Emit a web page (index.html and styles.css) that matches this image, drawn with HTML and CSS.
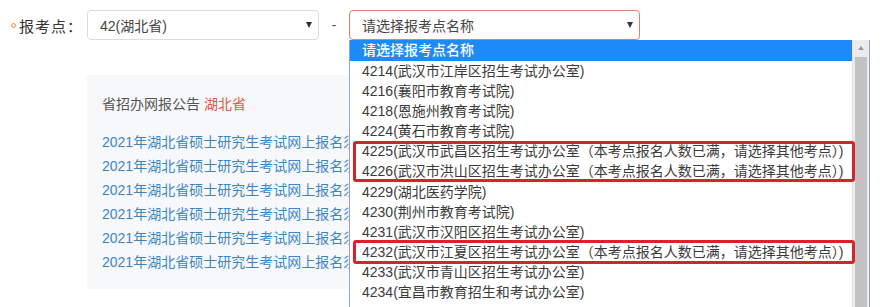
FILE: index.html
```html
<!DOCTYPE html>
<html lang="zh-CN">
<head>
  <meta charset="UTF-8">
  <title>报考点选择</title>
  <link rel="stylesheet" href="styles.css">
</head>
<body>
  <div class="form-row">
    <span class="req"></span>
    <span class="label">报考点：</span>
    <div class="select province">
      <span>42(湖北省)</span>
      <i class="arrow"></i>
    </div>
    <span class="dash">-</span>
    <div class="select site">
      <span>请选择报考点名称</span>
      <i class="arrow"></i>

      <div class="dropdown">
        <ul class="options">
          <li class="active">请选择报考点名称</li>
          <li>4214(武汉市江岸区招生考试办公室)</li>
          <li>4216(襄阳市教育考试院)</li>
          <li>4218(恩施州教育考试院)</li>
          <li>4224(黄石市教育考试院)</li>
          <li>4225(武汉市武昌区招生考试办公室（本考点报名人数已满，请选择其他考点）)</li>
          <li>4226(武汉市洪山区招生考试办公室（本考点报名人数已满，请选择其他考点）)</li>
          <li>4229(湖北医药学院)</li>
          <li>4230(荆州市教育考试院)</li>
          <li>4231(武汉市汉阳区招生考试办公室)</li>
          <li>4232(武汉市江夏区招生考试办公室（本考点报名人数已满，请选择其他考点）)</li>
          <li>4233(武汉市青山区招生考试办公室)</li>
          <li>4234(宜昌市教育招生和考试办公室)</li>
        </ul>
        <div class="scrollbar">
          <div class="scroll-up"></div>
          <div class="thumb"></div>
        </div>
        <div class="mark mark-1"></div>
        <div class="mark mark-2"></div>
      </div>
    </div>
  </div>

  <section class="notice">
    <h3>省招办网报公告 <span>湖北省</span></h3>
    <ul class="links">
      <li><a href="#">2021年湖北省硕士研究生考试网上报名须知</a></li>
      <li><a href="#">2021年湖北省硕士研究生考试网上报名须知</a></li>
      <li><a href="#">2021年湖北省硕士研究生考试网上报名须知</a></li>
      <li><a href="#">2021年湖北省硕士研究生考试网上报名须知</a></li>
      <li><a href="#">2021年湖北省硕士研究生考试网上报名须知</a></li>
      <li><a href="#">2021年湖北省硕士研究生考试网上报名须知</a></li>
    </ul>
  </section>
</body>
</html>
```

FILE: styles.css
```css
/* Base */
html,
body {
  height: 100%;
}

body {
  margin: 0;
  background-color: #fff;
  font-family: "Liberation Sans", "Noto Sans CJK SC", sans-serif;
  color: #333;
  overflow: hidden;
}

ul {
  list-style: none;
  margin: 0;
  padding: 0;
}

/* Form row */
.form-row {
  display: flex;
  align-items: center;
  padding: 10px 0 0 11px;
  height: 30px;
}

.req {
  width: 3px;
  height: 3px;
  border: 1px solid #e8874a;
  border-radius: 50%;
  margin-right: 3px;
}

.label {
  font-size: 15px;
  color: #333;
  width: 68px;
  letter-spacing: 1px;
}

.select {
  position: relative;
  box-sizing: border-box;
  height: 30px;
  border: 1px solid #dcdcdc;
  border-radius: 4px;
  display: flex;
  align-items: center;
  padding-left: 12px;
  font-size: 14px;
  color: #444;
}

.province {
  width: 232px;
}

.site {
  width: 291px;
  border-color: #d4866c;
}

.arrow {
  position: absolute;
  right: 6px;
  top: 11px;
  width: 0;
  height: 0;
  border-left: 3px solid transparent;
  border-right: 3px solid transparent;
  border-top: 6px solid #333;
}

.dash {
  width: 30px;
  text-align: center;
  font-size: 14px;
  color: #555;
}

/* Dropdown list */
.dropdown {
  position: absolute;
  left: -1px;
  top: 29px;
  width: 521px;
  height: 267px;
  box-sizing: border-box;
  border: 1px solid #8fa6c6;
  border-top: none;
  border-bottom: none;
  background-color: #fff;
  display: flex;
  overflow: hidden;
  z-index: 2;
}

.options {
  flex: 1;
  font-size: 14px;
  color: #3a3a3a;
}

.options li {
  height: 20.1px;
  line-height: 21px;
  padding-left: 12px;
  white-space: nowrap;
  overflow: hidden;
}

.options li.active {
  background-color: #1e8af8;
  color: #fff;
  height: 21px;
  font-weight: 500;
}

.scrollbar {
  width: 16px;
  background-color: #ececec;
  border-left: 1px solid #e2e2e2;
}

.scroll-up {
  height: 17px;
  position: relative;
}

.scroll-up::after {
  content: "";
  position: absolute;
  left: 5px;
  top: 6px;
  border-left: 3px solid transparent;
  border-right: 3px solid transparent;
  border-bottom: 4px solid #999;
}

.thumb {
  margin: 0 2px;
  height: 260px;
  background-color: #c2c2c2;
}

/* Red highlight boxes */
.mark {
  position: absolute;
  left: 3px;
  width: 496px;
  border: 3px solid #d6242b;
  border-radius: 3px;
}

.mark-1 {
  top: 101px;
  height: 35px;
}

.mark-2 {
  top: 200px;
  height: 18px;
}

/* Notice panel */
.notice {
  margin: 35px 0 0 87px;
  width: 560px;
  height: 214px;
  box-sizing: border-box;
  background-color: #f7f8fa;
  padding: 19px 0 0 15px;
}

.notice h3 {
  margin: 0 0 16px;
  font-size: 14px;
  font-weight: normal;
  color: #555;
  line-height: 20px;
}

.notice h3 span {
  color: #e2574c;
}

.links li {
  height: 24px;
  line-height: 24px;
  font-size: 14px;
}

.links a {
  color: #3d86c6;
  text-decoration: none;
}
```
